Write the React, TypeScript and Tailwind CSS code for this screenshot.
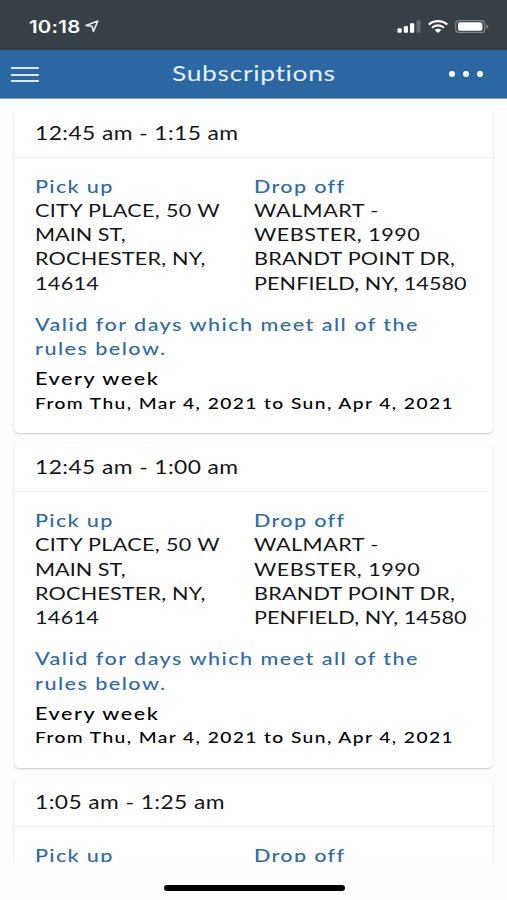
import React from 'react';

interface Line {
  text: string;
  className: string;
}

interface Subscription {
  id: number;
  time: string;
  pickUp: Line[];
  dropOff: Line[];
  loaded: boolean;
}

const pickUp: Line[] = [
  { text: 'CITY PLACE, 50 W', className: 'tracking-[0.27px]' },
  { text: 'MAIN ST,', className: 'tracking-[0px]' },
  { text: 'ROCHESTER, NY,', className: 'tracking-[0.15px]' },
  { text: '14614', className: 'tracking-[0.25px]' },
];

const dropOff: Line[] = [
  { text: 'WALMART -', className: 'tracking-[0.4px]' },
  { text: 'WEBSTER, 1990', className: 'tracking-[0.42px]' },
  { text: 'BRANDT POINT DR,', className: 'tracking-[0.2px]' },
  { text: 'PENFIELD, NY, 14580', className: 'tracking-[0.06px]' },
];

const subscriptions: Subscription[] = [
  { id: 1, time: '12:45 am - 1:15 am', pickUp, dropOff, loaded: true },
  { id: 2, time: '12:45 am - 1:00 am', pickUp, dropOff, loaded: true },
  { id: 3, time: '1:05 am - 1:25 am', pickUp: [], dropOff: [], loaded: false },
];

// One line of wide-set text
const Wide: React.FC<{ className?: string; children: React.ReactNode }> = ({ className = '', children }) => (
  <div className={`w-max origin-left scale-x-[1.2] whitespace-nowrap ${className}`}>{children}</div>
);

const StatusBar = () => (
  <div className="flex h-[50px] shrink-0 items-center justify-between bg-[#373f47] pl-[29px] pr-[18px] pt-[3px] text-white">
    <div className="flex items-center gap-[13px]">
      <Wide className="text-[17px] font-semibold leading-5 tracking-[0.2px] font-['Inter',sans-serif]">10:18</Wide>
      <svg width="14" height="13" viewBox="0 0 14 13" fill="none" stroke="#e8ebee" strokeWidth="1.6" strokeLinejoin="round">
        <path d="M12.8 1 L1 5.4 L7 6.2 L8.4 11.4 Z" />
      </svg>
    </div>
    <div className="flex items-center gap-[7px]">
      <svg width="24" height="13" viewBox="0 0 24 13" fill="#fff">
        <rect x="0.5" y="8.2" width="4.2" height="4.5" rx="1" />
        <rect x="6.8" y="6" width="4.2" height="6.7" rx="1" />
        <rect x="13" y="3.2" width="4.2" height="9.5" rx="1" />
        <rect x="19.5" y="0.5" width="4" height="12.2" rx="1" fillOpacity="0.24" />
      </svg>
      <svg width="20" height="13" viewBox="0 0 20 13" fill="none" stroke="#fff" strokeWidth="2.2">
        <path d="M0.8 4.6 C5.8 0 14.2 0 19.2 4.6" />
        <path d="M4 7.7 C7.3 4.7 12.7 4.7 16 7.7" />
        <path d="M6.7 10 C8.6 8.3 11.4 8.3 13.3 10 L10 13 Z" fill="#fff" stroke="none" />
      </svg>
      <svg width="34" height="13" viewBox="0 0 34 13">
        <rect x="0.7" y="0.7" width="29" height="11.6" rx="3.4" fill="none" stroke="#80878d" strokeWidth="1.2" />
        <rect x="3" y="2.2" width="24.4" height="8.6" rx="1.8" fill="#fff" />
        <path d="M31.3 4.4 C34.2 5.2 34.2 7.8 31.3 8.6 Z" fill="#80878d" />
      </svg>
    </div>
  </div>
);

const Header = () => (
  <header className="grid h-[48.5px] shrink-0 grid-cols-[1fr_auto_1fr] items-center border-b border-[#7fa5cc] bg-[#2b67a3] text-[#e4f1fd]">
    <button className="ml-[11px] flex w-7 flex-col gap-[4.5px] pt-[2px]">
      <span className="h-[2px] w-full bg-[#d5e9fb]" />
      <span className="h-[2px] w-full bg-[#d5e9fb]" />
      <span className="h-[2px] w-full bg-[#d5e9fb]" />
    </button>
    <h1 className="-mt-[1px] flex w-[163px]">
      <Wide className="text-[22px] leading-7 tracking-[0.55px]">Subscriptions</Wide>
    </h1>
    <button className="mr-[24px] flex gap-[8px] justify-self-end">
      <span className="size-[6px] rounded-full bg-white" />
      <span className="size-[6px] rounded-full bg-white" />
      <span className="size-[6px] rounded-full bg-white" />
    </button>
  </header>
);

const Address: React.FC<{ label: string; lines: Line[] }> = ({ label, lines }) => (
  <div>
    <Wide className="font-medium tracking-[1.1px] text-[#2e6ba6]">{label}</Wide>
    {lines.map((line) => (
      <Wide key={line.text} className={line.className}>{line.text}</Wide>
    ))}
  </div>
);

const Rules = () => (
  <>
    <div className="mt-[17px] font-medium text-[#2e6ba6]">
      <Wide className="tracking-[1.22px]">Valid for days which meet all of the</Wide>
      <Wide className="tracking-[1.22px]">rules below.</Wide>
    </div>
    <div className="mt-[5.5px] font-medium text-black">
      <Wide className="tracking-[1.3px]">Every week</Wide>
      <Wide className="mt-[0.5px] text-[16px] tracking-[1.17px]">From Thu, Mar 4, 2021 to Sun, Apr 4, 2021</Wide>
    </div>
  </>
);

const Card: React.FC<{ item: Subscription }> = ({ item }) => (
  <section className="h-[324.5px] shrink-0 rounded-[5px] bg-white shadow-[0_1px_2px_rgba(0,0,0,0.2)]">
    <div className="flex h-[49px] items-center border-b border-[#f3f3f3] pl-[21px] pt-[1px]">
      <Wide className="text-[19px] tracking-[0.35px]">{item.time}</Wide>
    </div>
    <div className="pl-[21px] pt-[16px]">
      <div className="grid grid-cols-[219px_1fr]">
        <Address label="Pick up" lines={item.pickUp} />
        <Address label="Drop off" lines={item.dropOff} />
      </div>
      {item.loaded && <Rules />}
    </div>
  </section>
);

export default function App() {
  return (
    <div className="flex h-[900px] w-[507px] flex-col overflow-hidden bg-[#fefefe] font-['Lato',sans-serif] text-[18px] leading-[24.3px] text-[#151515]">
      <StatusBar />
      <Header />
      <main className="mt-[13.5px] h-[750px] shrink-0 overflow-hidden px-[14px]">
        <div className="-mt-[3.5px] flex flex-col gap-[10px]">
          {subscriptions.map((item) => (
            <Card key={item.id} item={item} />
          ))}
        </div>
      </main>
      <div className="ml-[164px] mt-[23px] h-[6px] w-[181px] rounded-full bg-black" />
    </div>
  );
}
